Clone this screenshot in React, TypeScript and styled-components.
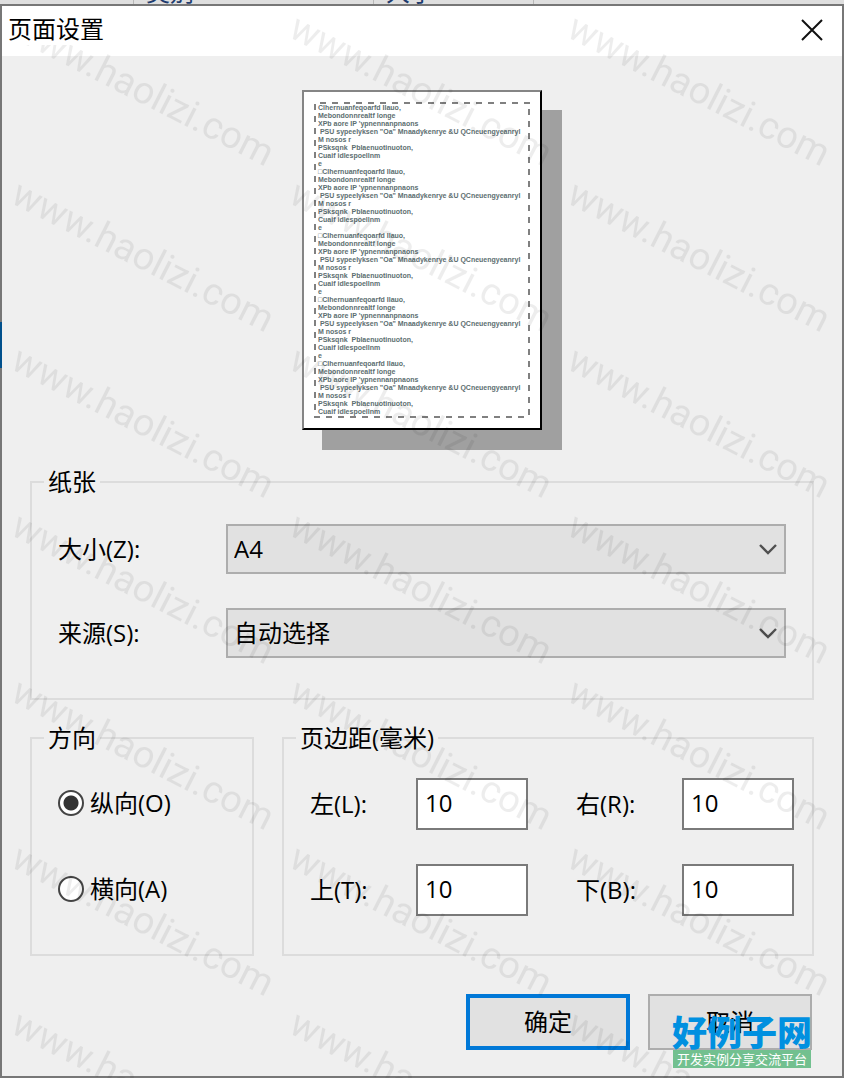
import React from "react";
import styled, { createGlobalStyle } from "styled-components";

const uiFont = '"Open Sans", "Noto Sans CJK SC", sans-serif';

const GlobalStyle = createGlobalStyle`
  *, *::before, *::after { box-sizing: border-box; }
  body {
    margin: 0;
    background: #dfdfdf;
    color: #000;
    font: 24px/32px ${uiFont};
  }
  button, input, select { font: inherit; color: inherit; }
`;

const Page = styled.div`
  position: relative;
  overflow: hidden;
`;

const BackdropStrip = styled.div`
  display: flex;
  align-items: flex-end;
  height: 4px;
  overflow: hidden;
  background: #dfdfdf;
  color: #1e3c6e;
`;

const BackdropColumn = styled.span<{ $width: number }>`
  flex: 0 0 ${(p) => p.$width}px;
  height: 24px;
  padding-left: 12px;
  border-right: 1px solid #b8b8b8;
  line-height: 24px;
`;

const Dialog = styled.main`
  position: relative;
  border: 2px solid #777;
  background: #efefef;
`;

const BackdropSelection = styled.div`
  position: absolute;
  left: -2px;
  top: 316px;
  width: 2px;
  height: 46px;
  background: #00508c;
`;

const TitleBar = styled.header`
  display: flex;
  align-items: center;
  justify-content: space-between;
  height: 50px;
  padding: 0 14px 2px 4px;
  background: #fff;
`;

const Title = styled.h1`
  position: relative;
  z-index: 2;
  margin: 0;
  padding: 0 2px 2px;
  background: #fff;
  font-size: 24px;
  line-height: 28px;
  font-weight: 400;
`;

const CloseButton = styled.button`
  display: grid;
  place-items: center;
  width: 32px;
  height: 32px;
  padding: 0;
  border: 0;
  background: transparent;
`;

const Form = styled.form`
  padding: 34px 28px 26px;
`;

const Paper = styled.div`
  width: 240px;
  height: 340px;
  margin: 0 auto 36px;
  padding: 10px;
  border: 2px solid;
  border-color: #858585 #000 #000 #858585;
  background: #fff;
  box-shadow: 20px 20px 0 #a0a0a0;
`;

const dash = "#808080 0 6px, transparent 6px 12px";

const PrintArea = styled.div`
  height: 316px;
  padding: 2px 0 0 4px;
  background:
    repeating-linear-gradient(90deg, ${dash}) 6px 0 / 210px 2px no-repeat,
    repeating-linear-gradient(90deg, ${dash}) 0 100% / 212px 2px no-repeat,
    repeating-linear-gradient(180deg, ${dash}) 0 2px / 2px 312px no-repeat,
    repeating-linear-gradient(180deg, ${dash}) 100% 7px / 2px 309px no-repeat;
  color: #5c6e70;
  font: 700 7px/8px "Liberation Sans", sans-serif;
  white-space: pre;
`;

const SampleLine = styled.div`
  height: 8px;
`;

const Group = styled.fieldset`
  min-width: 0;
  margin: 0;
  padding: 26px 26px 40px;
  border: 2px solid #dcdcdc;
`;

const Legend = styled.legend`
  margin-left: -14px;
  padding: 0 4px;
  line-height: 32px;
`;

const SelectRow = styled.div`
  display: grid;
  grid-template-columns: 168px 1fr;
  align-items: center;
  & + & { margin-top: 34px; }
`;

const SelectBox = styled.div`
  display: grid;
  align-items: center;
  & > * { grid-area: 1 / 1; }
`;

const Select = styled.select`
  appearance: none;
  width: 100%;
  height: 50px;
  padding: 0 40px 0 6px;
  border: 2px solid #adadad;
  border-radius: 0;
  background: #e1e1e1;
`;

const Chevron = styled.svg`
  justify-self: end;
  margin-right: 9px;
  pointer-events: none;
`;

const Columns = styled.div`
  display: grid;
  grid-template-columns: 224px 1fr;
  gap: 28px;
  margin-top: 22px;
`;

const OptionGroup = styled(Group)`
  padding: 24px 26px 38px;
`;

const RadioLabel = styled.label`
  display: flex;
  align-items: center;
  gap: 6px;
  height: 52px;
  padding-bottom: 2px;
  & + & { margin-top: 34px; }
`;

const Radio = styled.input`
  appearance: none;
  width: 26px;
  height: 26px;
  margin: 0;
  border: 2px solid #444;
  border-radius: 50%;
  background: #fff;
  &:checked { background: radial-gradient(circle, #333 0 7px, #fff 8px); }
`;

const MarginGroup = styled(OptionGroup)`
  display: grid;
  grid-template-columns: 1fr 1fr;
  gap: 34px 48px;
  padding-right: 18px;
`;

const MarginField = styled.label`
  display: grid;
  grid-template-columns: 1fr 112px;
  align-items: center;
`;

const MarginInput = styled.input`
  width: 100%;
  height: 52px;
  padding: 0 7px 4px;
  border: 2px solid #7a7a7a;
  border-radius: 0;
  background: #fff;
`;

const Actions = styled.div`
  display: flex;
  justify-content: flex-end;
  gap: 18px;
  margin-top: 38px;
  padding-right: 2px;
`;

const ActionButton = styled.button<{ $primary?: boolean }>`
  width: 164px;
  height: 56px;
  padding: 0;
  border: ${(p) => (p.$primary ? "4px solid #0078d7" : "2px solid #adadad")};
  background: #e1e1e1;
`;

const Watermark = styled.svg`
  position: absolute;
  inset: 0;
  width: 100%;
  height: 100%;
  pointer-events: none;
`;

const SiteBadge = styled.div`
  position: absolute;
  right: 32px;
  bottom: 10px;
  z-index: 3;
  width: 140px;
  text-align: center;
  white-space: nowrap;
  pointer-events: none;
`;

const SiteName = styled.div`
  color: #0090e0;
  font: 900 35px/38px "Noto Sans CJK SC", sans-serif;
`;

const SiteTagline = styled.div`
  margin: 0 1px;
  background: #72c08f;
  color: #fff;
  font: 13px/18px "Noto Sans CJK SC", sans-serif;
`;

const sample = [
  "□Clhernuanfeqoarfd Ilauo,",
  "Mebondonnrealtf longe",
  "XPb aore IP 'ypnennanpnaons",
  " PSU sypeelyksen \"Oa\" Mnaadykenrye &U QCneuengyeanryl",
  "M nosos r",
  "PSksqnk  Pblaenuotinuoton,",
  "Cuaif idlespoellnm",
  "e",
];

const lines = Array.from({ length: 39 }, (_, i) =>
  i === 0 ? sample[0].slice(1) : sample[i % sample.length]
);

const ChevronDown = () => (
  <Chevron width="18" height="12" viewBox="0 0 18 12" fill="none" aria-hidden="true">
    <path d="M1 2l8 8 8-8" stroke="#505050" strokeWidth="2.4" />
  </Chevron>
);

const margins = [
  { id: "left", label: "左(L):" },
  { id: "right", label: "右(R):" },
  { id: "top", label: "上(T):" },
  { id: "bottom", label: "下(B):" },
];

export default function App() {
  return (
    <>
      <GlobalStyle />
      <Page>
        <BackdropStrip aria-hidden="true">
          <BackdropColumn $width={134} />
          <BackdropColumn $width={240}>类别</BackdropColumn>
          <BackdropColumn $width={160}>大小</BackdropColumn>
        </BackdropStrip>
        <Dialog>
          <BackdropSelection />
          <TitleBar>
            <Title>页面设置</Title>
            <CloseButton type="button" aria-label="关闭">
              <svg width="22" height="22" viewBox="0 0 22 22" fill="none">
                <path d="M1 1l20 20M21 1L1 21" stroke="#111" strokeWidth="2" />
              </svg>
            </CloseButton>
          </TitleBar>
          <Form onSubmit={(e) => e.preventDefault()}>
            <Paper>
              <PrintArea>
                {lines.map((line, i) => (
                  <SampleLine key={i}>{line}</SampleLine>
                ))}
              </PrintArea>
            </Paper>
            <Group>
              <Legend>纸张</Legend>
              <SelectRow>
                <label htmlFor="size">大小(Z):</label>
                <SelectBox>
                  <Select id="size">
                    <option>A4</option>
                  </Select>
                  <ChevronDown />
                </SelectBox>
              </SelectRow>
              <SelectRow>
                <label htmlFor="source">来源(S):</label>
                <SelectBox>
                  <Select id="source">
                    <option>自动选择</option>
                  </Select>
                  <ChevronDown />
                </SelectBox>
              </SelectRow>
            </Group>
            <Columns>
              <OptionGroup>
                <Legend>方向</Legend>
                <RadioLabel>
                  <Radio type="radio" name="orientation" defaultChecked />
                  纵向(O)
                </RadioLabel>
                <RadioLabel>
                  <Radio type="radio" name="orientation" />
                  横向(A)
                </RadioLabel>
              </OptionGroup>
              <MarginGroup>
                <Legend>页边距(毫米)</Legend>
                {margins.map((m) => (
                  <MarginField key={m.id}>
                    {m.label}
                    <MarginInput name={m.id} defaultValue="10" />
                  </MarginField>
                ))}
              </MarginGroup>
            </Columns>
            <Actions>
              <ActionButton type="submit" $primary>
                确定
              </ActionButton>
              <ActionButton type="button">取消</ActionButton>
            </Actions>
          </Form>
        </Dialog>
        <Watermark aria-hidden="true">
          <defs>
            <pattern id="site" x="6" y="10" width="278" height="166" patternUnits="userSpaceOnUse">
              <text
                transform="translate(3 26) rotate(27)"
                fontFamily="Roboto, sans-serif"
                fontSize="38"
                fill="#000"
                fillOpacity="0.07"
              >
                www.haolizi.com
              </text>
            </pattern>
          </defs>
          <rect width="100%" height="100%" fill="url(#site)" />
        </Watermark>
        <SiteBadge>
          <SiteName>好例子网</SiteName>
          <SiteTagline>开发实例分享交流平台</SiteTagline>
        </SiteBadge>
      </Page>
    </>
  );
}
